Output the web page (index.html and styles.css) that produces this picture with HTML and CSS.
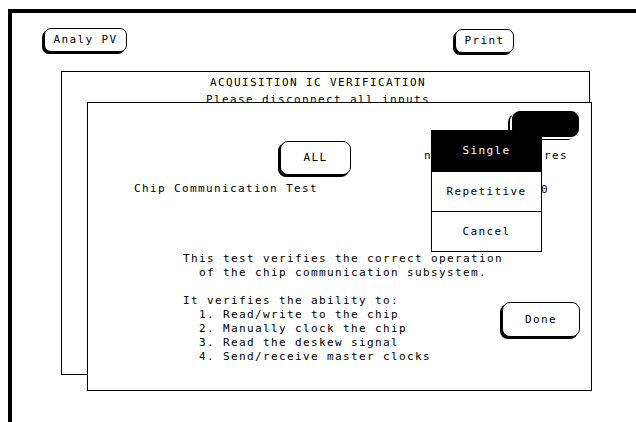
FILE: index.html
```html
<!DOCTYPE html>
<html lang="en">
<head>
    <meta charset="UTF-8">
    <title>Acquisition IC Verification</title>
    <link rel="stylesheet" href="styles.css">
</head>
<body>
    <div class="screen">
        <div class="toolbar">
            <button class="key key-analy">Analy PV</button>
            <button class="key key-print">Print</button>
        </div>

        <div class="back-panel">
            <div class="title">ACQUISITION IC VERIFICATION</div>
            <div class="title">Please disconnect all inputs</div>
        </div>

        <div class="dialog">
            <div class="controls">
                <div class="col-left">
                    <button class="key key-all">ALL</button>
                    <div class="chip-label">Chip Communication Test</div>
                </div>
                <div class="col-right">
                    <button class="key key-run"></button>
                    <div class="measures">number of measures</div>
                    <div class="count">10</div>
                </div>
            </div>

            <div class="details">
<pre class="desc">This test verifies the correct operation
  of the chip communication subsystem.

It verifies the ability to:
  1. Read/write to the chip
  2. Manually clock the chip
  3. Read the deskew signal
  4. Send/receive master clocks</pre>
                <button class="key key-done">Done</button>
            </div>

            <ul class="menu">
                <li class="menu-item active">Single</li>
                <li class="menu-item">Repetitive</li>
                <li class="menu-item">Cancel</li>
            </ul>
        </div>
    </div>
</body>
</html>
```

FILE: styles.css
```css
html, body{
    margin: 0;
    height: 100%;
    overflow: hidden;
    background: #fff;
}

body, button, pre{
    font-family: "DejaVu Sans Mono", "Liberation Mono", monospace;
    font-size: 11px;
    letter-spacing: 1.38px;
    color: #000;
}

.screen{
    position: relative;
    margin: 9px 0 0 8px;
    height: 100%;
    border-top: 4px solid #000;
    border-left: 4px solid #000;
}

.toolbar{
    display: flex;
    align-items: flex-start;
    padding: 15px 0 0 32px;
}

.key{
    box-sizing: border-box;
    display: block;
    padding: 0;
    background: #fff;
    border: 1px solid #000;
    border-radius: 7px;
    box-shadow: -2px 2px 0 #000;
    line-height: 14px;
    text-align: center;
}

.key-analy{
    width: 83px;
    height: 24px;
}

.key-print{
    width: 59px;
    height: 24px;
    margin: 1px 0 0 328px;
}

.back-panel{
    box-sizing: border-box;
    width: 529px;
    height: 304px;
    margin: 18px 0 0 49px;
    padding: 2px 15px 0 0;
    border: 1px solid #000;
}

.title{
    text-align: center;
    line-height: 17px;
}

/* front window, sits over the back panel */
.dialog{
    position: absolute;
    left: 75px;
    top: 89px;
    box-sizing: border-box;
    width: 505px;
    height: 289px;
    padding: 8px 0 0 46px;
    background: #fff;
    border: 1px solid #000;
}

.controls{
    display: grid;
    grid-template-columns: 290px 1fr;
    line-height: 14px;
}

.key-all{
    width: 71px;
    height: 34px;
    margin: 30px 0 0 146px;
    border-radius: 8px;
}

.chip-label{
    margin-top: 7px;
}

.key-run{
    width: 67px;
    height: 26px;
    margin-left: 88px;
    background: #000;
    border-radius: 8px;
    box-shadow: -2px 2px 0 #fff, -4px 3px 0 #000;
}

.measures{
    margin-top: 12px;
    white-space: nowrap;
}

.count{
    margin: 20px 0 0 109px;
}

.details{
    display: grid;
    grid-template-columns: 319px auto;
    align-items: start;
    margin: 55px 0 0 49px;
}

.desc{
    margin: 0;
    line-height: 14px;
}

.key-done{
    width: 78px;
    height: 35px;
    margin-top: 50px;
    border-radius: 8px;
}

/* popup choice menu */
.menu{
    position: absolute;
    left: 343px;
    top: 27px;
    box-sizing: border-box;
    width: 111px;
    margin: 0;
    padding: 0;
    list-style: none;
    background: #fff;
    border: 1px solid #000;
}

.menu-item{
    height: 40px;
    line-height: 40px;
    text-align: center;
}

.menu-item + .menu-item{
    border-top: 1px solid #000;
    height: 39px;
    line-height: 39px;
}

.menu-item.active{
    background: #000;
    color: #fff;
}
```
